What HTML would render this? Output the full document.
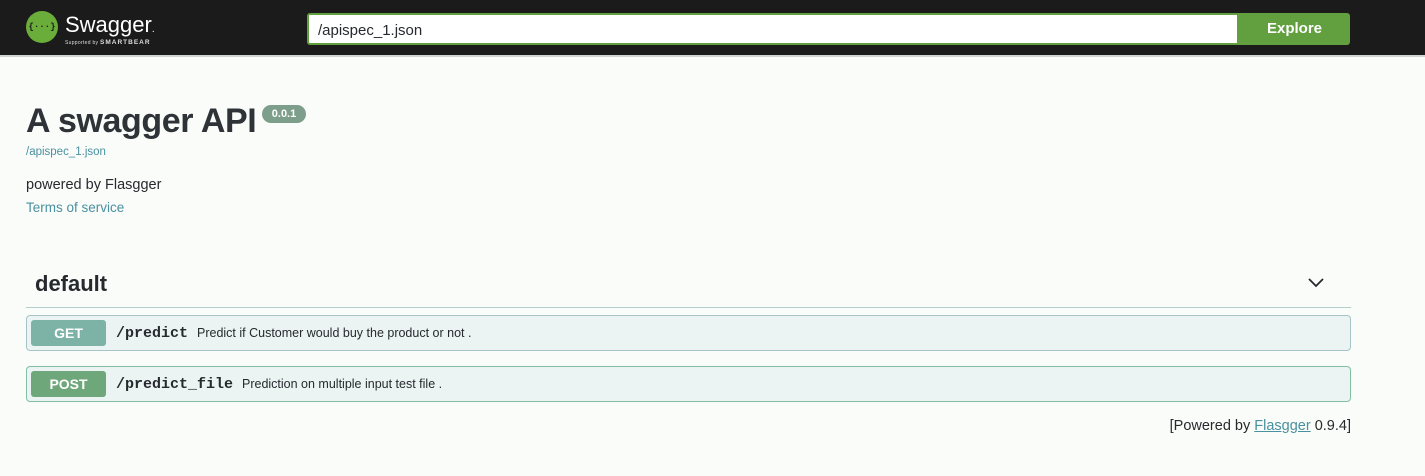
<!DOCTYPE html>
<html><head><meta charset="utf-8"><style>
body{margin:0;width:1425px;height:476px;background:#fafcfa;font-family:"Liberation Sans",sans-serif;color:#262a2e;position:relative;overflow:hidden}
.hdr{position:absolute;left:0;top:0;width:1425px;height:57px;background:#1b1b1b;border-bottom:2px solid #cfd6d0;box-sizing:border-box}
.logo{position:absolute;left:26px;top:11px;width:32px;height:32px;border-radius:50%;background:#6aad3a;color:#1b1b1b;font:bold 9px "Liberation Mono",monospace;text-align:center;line-height:32px}
.sw{position:absolute;left:65px;top:12px;color:#fff;font-size:22px}
.sb{position:absolute;left:65px;top:39px;color:#ddd;font-size:5px;letter-spacing:.3px}
.sb b{font-size:6.5px;letter-spacing:1px}
.inp{position:absolute;left:307px;top:13px;width:932px;height:32px;box-sizing:border-box;background:#fff;border:2px solid #62a03f;border-radius:3px 0 0 3px;font-size:15px;color:#262a2e;padding:7px 9px}
.btn{position:absolute;left:1239px;top:13px;width:111px;height:32px;background:#62a03f;border-radius:0 3px 3px 0;color:#fff;font-weight:bold;font-size:15px;text-align:center;line-height:32px}
h1{position:absolute;left:26px;top:102px;margin:0;font-size:34px;font-weight:bold;color:#2e3338;letter-spacing:-0.4px}
.badge{position:absolute;left:262px;top:105px;width:44px;height:18px;background:#7d9e8a;border-radius:9px;color:#fff;font-size:11px;font-weight:bold;text-align:center;line-height:18px}
.t{position:absolute;color:#4990a0}
.def{position:absolute;left:35px;top:271px;font-size:22px;font-weight:bold;color:#262a2e}
.line{position:absolute;left:26px;top:307px;width:1325px;height:1px;background:#b7cdcf}
.row{position:absolute;left:26px;width:1325px;height:36px;box-sizing:border-box;border:1px solid #a6c4c8;border-radius:4px;background:#ecf3f3}
.m{position:absolute;left:4px;top:4px;width:75px;height:26px;border-radius:3px;color:#fff;font-weight:bold;font-size:14px;text-align:center;line-height:26px}
.p{position:absolute;left:89px;top:9px;font:bold 15px "Liberation Mono",monospace;color:#262a2e}
.d{position:absolute;top:10px;font-size:12.5px;color:#262a2e}
.foot{position:absolute;right:74px;top:418px;font-size:14.5px;color:#262a2e}
.foot u{color:#4990a0}
</style></head><body>
<div class="hdr">
<div class="logo">{···}</div>
<div class="sw">Swagger<span style="font-size:10px">.</span></div>
<div class="sb">Supported by <b>SMARTBEAR</b></div>
<div class="inp">/apispec_1.json</div>
<div class="btn">Explore</div>
</div>
<h1>A swagger API</h1>
<div class="badge">0.0.1</div>
<div class="t" style="left:26px;top:146px;font-size:11.5px">/apispec_1.json</div>
<div style="position:absolute;left:26px;top:177px;font-size:14.5px">powered by Flasgger</div>
<div class="t" style="left:26px;top:200px;font-size:13.5px">Terms of service</div>
<div class="def">default</div>
<svg style="position:absolute;left:1307px;top:277px" width="18" height="12" viewBox="0 0 18 12"><path d="M2 2 L9 9 L16 2" fill="none" stroke="#262a2e" stroke-width="1.8"/></svg>
<div class="line"></div>
<div class="row" style="top:315px"><div class="m" style="background:#7db3a7">GET</div><div class="p">/predict</div><div class="d" style="left:170px">Predict if Customer would buy the product or not .</div></div>
<div class="row" style="top:366px;border-color:#80bfa4"><div class="m" style="background:#6ea77a">POST</div><div class="p">/predict_file</div><div class="d" style="left:215px">Prediction on multiple input test file .</div></div>
<div class="foot">[Powered by <u>Flasgger</u> 0.9.4]</div>
</body></html>
